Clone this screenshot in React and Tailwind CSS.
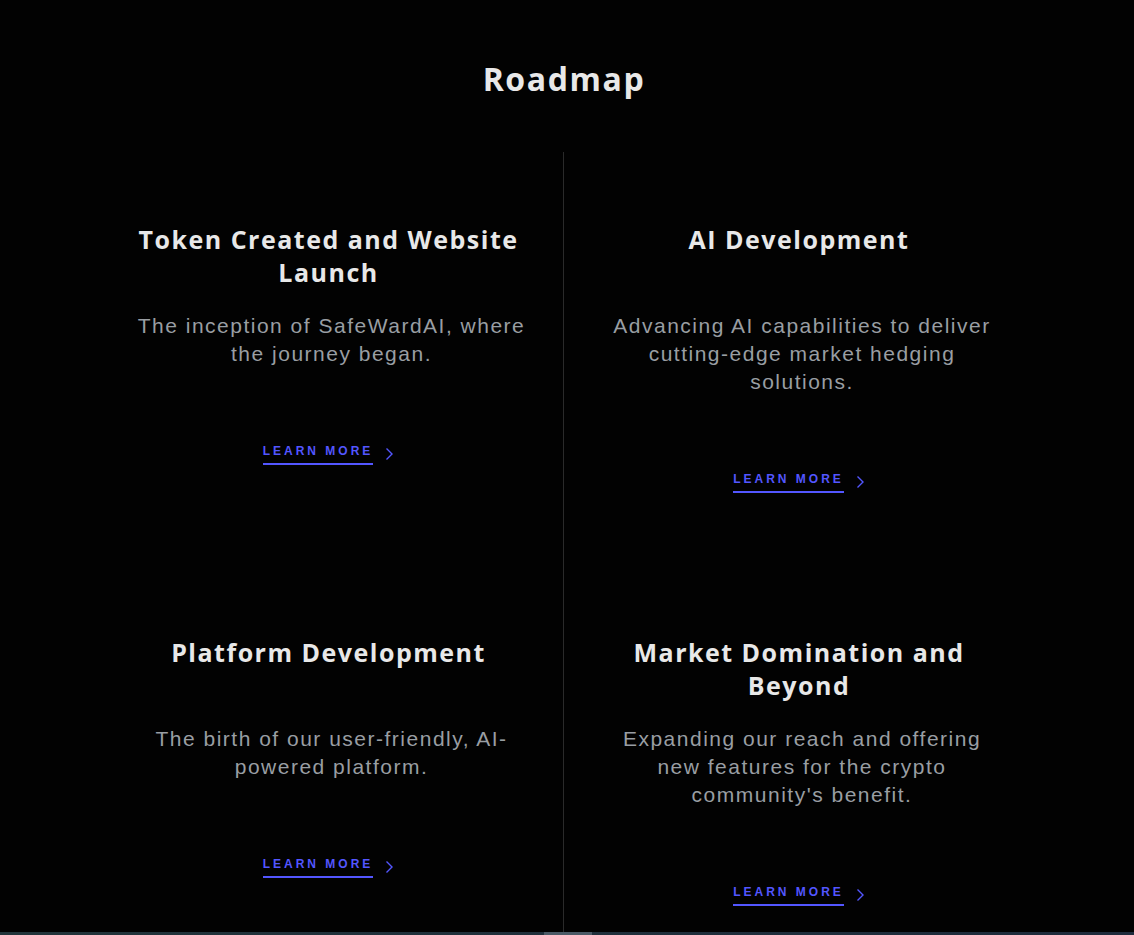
import React from "react";

const items = [
  {
    title: "Token Created and Website Launch",
    text: "The inception of SafeWardAI, where the journey began.",
  },
  {
    title: "AI Development",
    text: "Advancing AI capabilities to deliver cutting-edge market hedging solutions.",
  },
  {
    title: "Platform Development",
    text: "The birth of our user-friendly, AI-powered platform.",
  },
  {
    title: "Market Domination and Beyond",
    text: "Expanding our reach and offering new features for the crypto community's benefit.",
  },
];

function Chevron() {
  return (
    <svg width="9" height="14" viewBox="0 0 9 14" fill="none" className="ml-[12px]">
      <path d="M1.5 1.5 L7 7 L1.5 12.5" stroke="#5356ff" strokeWidth="1.4" />
    </svg>
  );
}

function Card({ title, text, divider }) {
  return (
    <div
      className={
        "flex flex-col items-center px-[40px] pt-[71px] pb-[72px] text-center " +
        (divider ? "border-r border-[#2a2a2a]" : "")
      }
    >
      <h3 className="min-h-[66px] w-[400px] font-['Open_Sans',sans-serif] text-[25px] font-bold leading-[33px] tracking-[1.5px] text-[#e8e8e8]">
        {title}
      </h3>
      <p className="mt-[23px] w-[400px] pl-[6px] font-['Liberation_Sans',Arial,sans-serif] text-[21px] leading-[28px] tracking-[1.5px] text-[#999ea3]">
        {text}
      </p>
      <a className="mt-[75px] flex items-center" href="#">
        <span className="border-b-2 border-[#5356ff] pb-[4px] font-['Liberation_Sans',Arial,sans-serif] text-[12px] font-bold leading-[16px] tracking-[3px] text-[#5356ff]">
          LEARN MORE
        </span>
        <Chevron />
      </a>
    </div>
  );
}

export default function App() {
  return (
    <div className="flex h-[935px] w-full flex-col overflow-hidden bg-[#020202]">
      <div className="flex flex-1 overflow-hidden">
        <div className="flex w-[1128px] flex-col items-center">
          <h2 className="mt-[57px] font-['Open_Sans',sans-serif] text-[32px] font-bold leading-[44px] tracking-[1.6px] text-[#e8e8e8]">
            Roadmap
          </h2>
          <div className="mt-[51px] grid w-[940px] grid-cols-2">
            <Card {...items[0]} divider />
            <Card {...items[1]} />
            <Card {...items[2]} divider />
            <Card {...items[3]} />
          </div>
        </div>
      </div>
      <div className="flex h-[3px] w-full bg-gradient-to-r from-[#22353b] to-[#1e2b3c]">
        <div className="w-[544px]" />
        <div className="w-[48px] bg-[#4b5a66]" />
      </div>
    </div>
  );
}
